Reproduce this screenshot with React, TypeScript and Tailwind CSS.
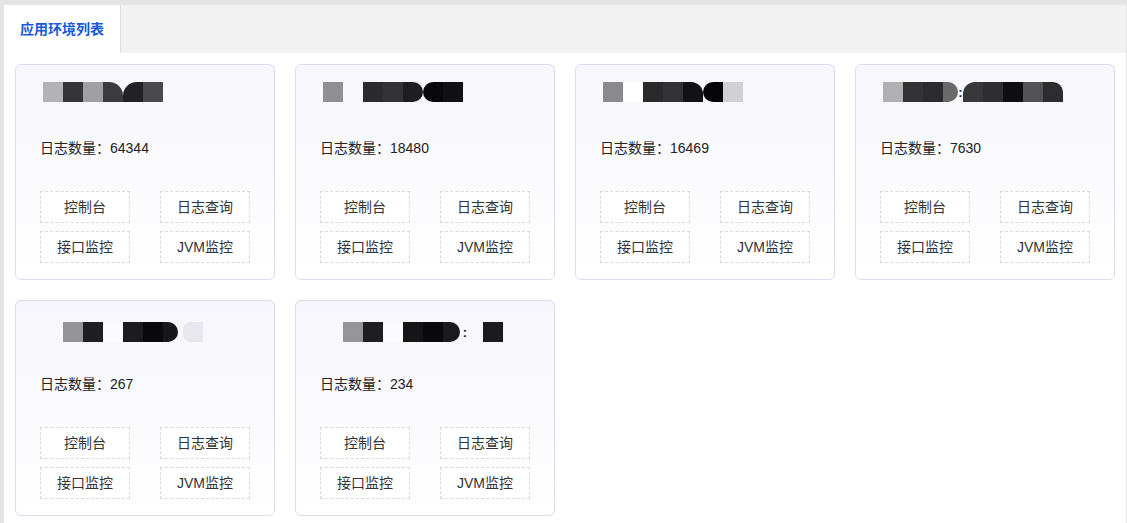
import React from 'react';

type Block = { w: number; c: string; r?: string; t?: string };

interface EnvCard {
    count: number;
    left: number; // distance of the name from the card's outer left edge
    top: number;
    blocks: Block[];
}

const cards: EnvCard[] = [
    {
        count: 64344,
        left: 28,
        top: 18,
        blocks: [
            { w: 20, c: '#b3b3b5' },
            { w: 20, c: '#353438' },
            { w: 20, c: '#a09fa4' },
            { w: 20, c: '#3b3a3f', r: 'rounded-tr-[14px]' },
            { w: 20, c: '#222224', r: 'rounded-tl-[14px]' },
            { w: 20, c: '#4a494d' },
        ],
    },
    {
        count: 18480,
        left: 28,
        top: 18,
        blocks: [
            { w: 20, c: '#909092' },
            { w: 20, c: '#f8f8fc' },
            { w: 20, c: '#2b2b2e' },
            { w: 20, c: '#333336' },
            { w: 20, c: '#1e1e21', r: 'rounded-r-[10px]' },
            { w: 20, c: '#09090c', r: 'rounded-l-[10px]' },
            { w: 20, c: '#111114' },
        ],
    },
    {
        count: 16469,
        left: 28,
        top: 18,
        blocks: [
            { w: 20, c: '#8a8a8c' },
            { w: 20, c: '#ffffff' },
            { w: 20, c: '#2a2a2c' },
            { w: 20, c: '#333335' },
            { w: 20, c: '#111116', r: 'rounded-tr-[12px]' },
            { w: 20, c: '#050508', r: 'rounded-l-[10px]' },
            { w: 20, c: '#d0d0d2' },
        ],
    },
    {
        count: 7630,
        left: 28,
        top: 18,
        blocks: [
            { w: 20, c: '#b1b1b3' },
            { w: 20, c: '#333336' },
            { w: 20, c: '#2c2c2f' },
            { w: 15, c: '#6a6a6c', r: 'rounded-r-[10px]' },
            { w: 5, c: 'transparent', t: ':' },
            { w: 20, c: '#38383b', r: 'rounded-tl-[12px]' },
            { w: 20, c: '#2e2e30' },
            { w: 20, c: '#0f0f12' },
            { w: 20, c: '#535355' },
            { w: 20, c: '#2d2d30', r: 'rounded-tr-[10px]' },
        ],
    },
    {
        count: 267,
        left: 48,
        top: 22,
        blocks: [
            { w: 20, c: '#959597' },
            { w: 20, c: '#1f1e24' },
            { w: 20, c: '#fbfbfe' },
            { w: 20, c: '#1c1b20' },
            { w: 20, c: '#0a0a0c' },
            { w: 15, c: '#17161c', r: 'rounded-r-[10px]' },
            { w: 5, c: 'transparent' },
            { w: 20, c: '#e8e7ee', r: 'rounded-l-[8px]' },
        ],
    },
    {
        count: 234,
        left: 48,
        top: 22,
        blocks: [
            { w: 20, c: '#969698' },
            { w: 20, c: '#1e1d22' },
            { w: 20, c: '#fbfbfe' },
            { w: 20, c: '#151517' },
            { w: 20, c: '#0a0a0c' },
            { w: 17, c: '#1a191e', r: 'rounded-r-[10px]' },
            { w: 10, c: 'transparent', t: ':' },
            { w: 13, c: 'transparent' },
            { w: 20, c: '#1b1a1f' },
        ],
    },
];

const ActionButton = ({ label }: { label: string }) => (
    <button
        type="button"
        className="h-[32px] w-[90px] border border-dashed border-[#d9d9d9] bg-white text-[14px] text-[#333333]"
    >
        {label}
    </button>
);

const Card = ({ card }: { card: EnvCard }) => (
    <div className="flex h-[216px] w-[260px] flex-col rounded-[6px] border border-[#dcdaf3] bg-gradient-to-b from-[#f6f6fc] to-white px-[24px] pb-[16px]">
        {/* blurred app name */}
        <div
            className="flex h-[20px]"
            style={{ paddingLeft: card.left - 25, marginTop: card.top - 1 }}
        >
            {card.blocks.map((b, i) => (
                <div
                    key={i}
                    className={`flex h-[20px] items-center justify-center text-[13px] font-bold leading-none text-[#222] ${b.r ?? ''}`}
                    style={{ width: b.w, backgroundColor: b.c }}
                >
                    {b.t}
                </div>
            ))}
        </div>
        <div
            className="text-[14px] leading-[20px] text-[#222222]"
            style={{ marginTop: 36 - (card.top - 18) }}
        >
            日志数量：{card.count}
        </div>
        <div className="mt-auto grid grid-cols-[90px_90px] justify-between gap-y-[8px]">
            <ActionButton label="控制台" />
            <ActionButton label="日志查询" />
            <ActionButton label="接口监控" />
            <ActionButton label="JVM监控" />
        </div>
    </div>
);

export default function App() {
    return (
        <div
            className="h-[523px] w-[1127px] overflow-hidden bg-[#e4e4e4] pt-[5px] pl-[4px]"
            style={{ fontFamily: '"Liberation Sans", "Noto Sans CJK SC", sans-serif' }}
        >
            <div className="h-full w-[1122px] bg-white">
                {/* Tabs */}
                <div className="flex h-[48px] bg-[#f2f2f2]">
                    <div className="flex w-[117px] items-center justify-center border-r border-[#e0e0e0] bg-white text-[14px] font-semibold text-[#1759d6]">
                        应用环境列表
                    </div>
                </div>
                {/* Cards */}
                <div className="grid grid-cols-[repeat(4,260px)] gap-[20px] pt-[11px] pl-[11px]">
                    {cards.map((c, i) => (
                        <Card key={i} card={c} />
                    ))}
                </div>
            </div>
        </div>
    );
}
